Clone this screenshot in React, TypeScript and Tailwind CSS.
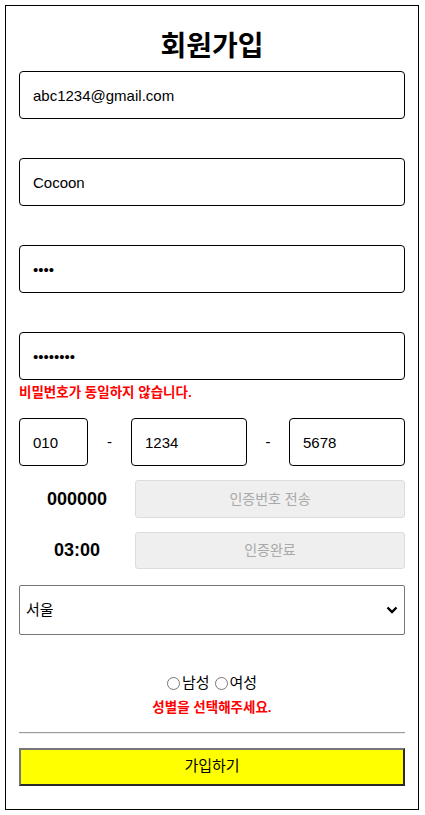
import React from "react";

const font = { fontFamily: '"Liberation Sans", "Noto Sans CJK KR", sans-serif' };

function TextInput({ value, type = "text" }: { value: string; type?: string }) {
  return (
    <input
      type={type}
      defaultValue={value}
      className="block w-full h-[48px] border border-black rounded-[4px] px-[13px] text-[15px] text-black outline-none"
    />
  );
}

export default function App() {
  return (
    <div className="p-[5px] bg-white" style={font}>
      <div className="w-[414px] border border-black px-[13px] pb-[23px] text-black">
        <h1 className="text-center text-[28px] font-bold leading-[40px] mt-[21px] mb-[4px]">회원가입</h1>
        <TextInput value="abc1234@gmail.com" />
        <div className="h-[39px]" />
        <TextInput value="Cocoon" />
        <div className="h-[39px]" />
        <TextInput value="1234" type="password" />
        <div className="h-[39px]" />
        <TextInput value="12345678" type="password" />
        <div className="h-[38px] pt-[4px] text-[13.5px] font-bold text-[#ff0000] leading-[17px]">
          비밀번호가 동일하지 않습니다.
        </div>
        <div className="flex items-center">
          <input
            defaultValue="010"
            className="w-[69px] h-[48px] border border-black rounded-[4px] px-[13px] text-[15px] outline-none"
          />
          <div className="w-[43px] text-center text-[15px]">-</div>
          <input
            defaultValue="1234"
            className="w-[116px] h-[48px] border border-black rounded-[4px] px-[13px] text-[15px] outline-none"
          />
          <div className="w-[42px] text-center text-[15px]">-</div>
          <input
            defaultValue="5678"
            className="w-[116px] h-[48px] border border-black rounded-[4px] px-[13px] text-[15px] outline-none"
          />
        </div>
        <div className="flex items-center mt-[14px]">
          <div className="w-[116px] text-center text-[18px] font-bold">000000</div>
          <button
            disabled
            className="flex-1 h-[38px] bg-[#efefef] border border-[#dcdcdc] rounded-[3px] text-[14px] text-[#a9a9a9]"
          >
            인증번호 전송
          </button>
        </div>
        <div className="flex items-center mt-[14px]">
          <div className="w-[116px] text-center text-[18px] font-bold">03:00</div>
          <button
            disabled
            className="flex-1 h-[37px] bg-[#efefef] border border-[#dcdcdc] rounded-[3px] text-[14px] text-[#a9a9a9]"
          >
            인증완료
          </button>
        </div>
        <div className="relative mt-[16px]">
          <select className="block w-full h-[50px] appearance-none border border-[#767676] rounded-[2px] pl-[6px] text-[15px] bg-white text-black outline-none">
            <option>서울</option>
            <option>경기</option>
            <option>부산</option>
          </select>
          <svg
            className="absolute right-[7px] top-[21px] pointer-events-none"
            width="12"
            height="8"
            viewBox="0 0 12 8"
          >
            <path d="M1.5 1.5 L6 6 L10.5 1.5" fill="none" stroke="black" strokeWidth="2.4" />
          </svg>
        </div>
        <div className="mt-[37px] flex items-center justify-center text-[15px]">
          <label className="flex items-center">
            <input type="radio" name="gender" className="m-0 mr-[2px] w-[13px] h-[13px]" />
            남성
          </label>
          <label className="flex items-center ml-[5px]">
            <input type="radio" name="gender" className="m-0 mr-[2px] w-[13px] h-[13px]" />
            여성
          </label>
        </div>
        <div className="text-center text-[13.5px] font-bold text-[#ff0000] leading-[17px] mt-[4px]">
          성별을 선택해주세요.
        </div>
        <div className="mt-[16px] border-t border-t-[#9a9a9a] border-b border-b-[#eeeeee]" />
        <button className="block w-full mt-[14px] h-[38px] bg-[#ffff00] border-2 border-t-[#767676] border-l-[#767676] border-b-[#2a2a2a] border-r-[#2a2a2a] text-[15px] text-black">
          가입하기
        </button>
      </div>
    </div>
  );
}
